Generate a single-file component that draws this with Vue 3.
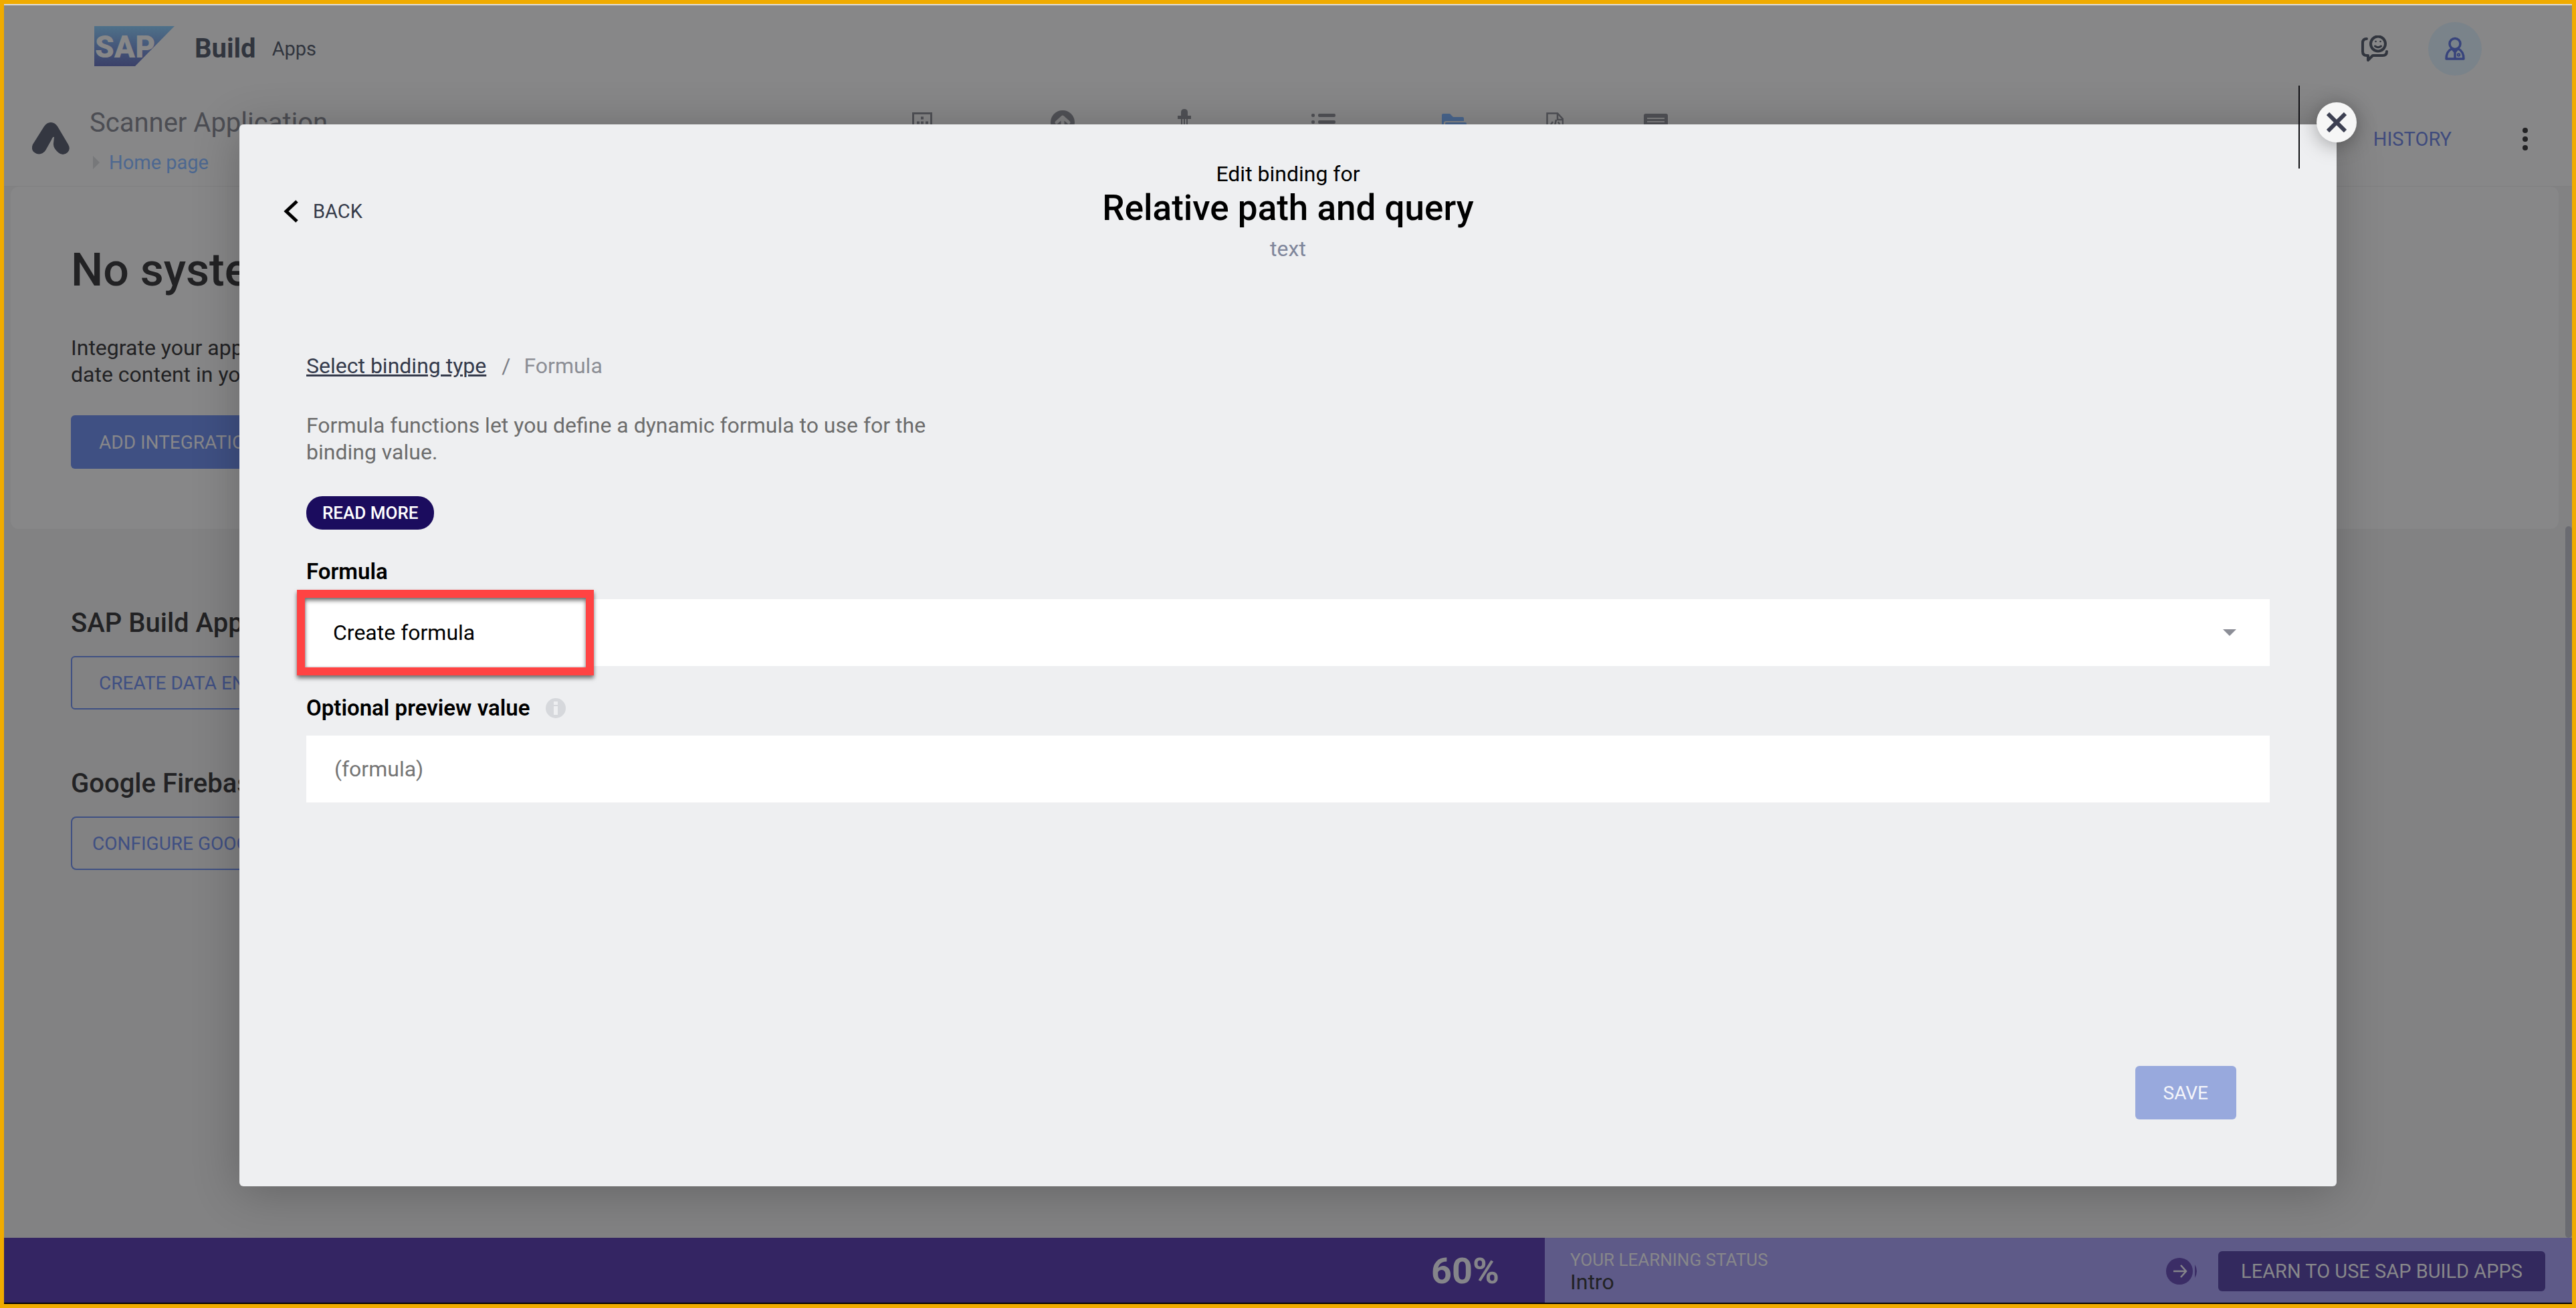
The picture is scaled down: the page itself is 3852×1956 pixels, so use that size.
<script setup>
import { ref } from 'vue'

const formula = ref('Create formula')
const preview = ref('')
</script>

<template>
  <div class="frame">
    <div class="app">
      <header class="shell">
        <svg class="sap" viewBox="0 0 120 60" width="120" height="60" role="img" aria-label="SAP">
          <defs>
            <linearGradient id="sapFill" x1="0" y1="0" x2="0" y2="1">
              <stop offset="0" stop-color="#4f7189" />
              <stop offset="0.5" stop-color="#45577a" />
              <stop offset="1" stop-color="#3b4169" />
            </linearGradient>
          </defs>
          <path d="M0 0H120L61 60H0Z" fill="url(#sapFill)" />
          <text x="1" y="47" class="sap-word">SAP</text>
        </svg>
        <strong class="brand">Build</strong>
        <span class="product">Apps</span>
        <div class="shell-actions">
          <button class="icon-button" aria-label="Feedback">
            <svg viewBox="0 0 40 40" width="40" height="40" fill="none" stroke="#31353e" stroke-width="4" stroke-linecap="round" stroke-linejoin="round">
              <path d="M8 5Q2 5 2 11V24Q2 30 8 30H10V37L17 30H32Q38 30 38 24" />
              <circle cx="25" cy="12.500" r="11" />
              <path d="M20.500 16Q25 19.500 29.500 16" stroke-width="3" />
              <path d="M21.500 9h.1M28.500 9h.1" stroke-width="2.500" />
            </svg>
          </button>
          <button class="avatar" aria-label="Profile">
            <svg viewBox="0 0 30 36" width="30" height="36" fill="none" stroke="#38447c" stroke-width="3.500" stroke-linejoin="round">
              <circle cx="15" cy="10.500" r="8" />
              <path d="M10 18Q2 22 2 33H28Q28 22 20 18" />
              <path d="M10 17L15 23L20 17M15 21V33" />
              <circle cx="20.500" cy="27" r="1" />
            </svg>
          </button>
        </div>
      </header>

      <div class="project">
        <svg class="mark" viewBox="0 0 56 48" width="56" height="48" fill="#343741">
          <path d="M18 6Q22 0 28 0T38 6L54 33Q58 40 53 45Q46 51 39 45Q31 38 32 31L33 22Q31 21 29 26L20 42Q15 49 7 47Q-3 43 1 33Z" />
        </svg>
        <div class="project-name">
          <span class="project-title">Scanner Application</span>
          <a class="crumb" href="#home">
            <svg viewBox="0 0 10 20" width="10" height="20"><path d="M0 0L10 10L0 20Z" fill="#77787a" /></svg>
            Home page
          </a>
        </div>
        <nav class="tools" aria-label="Sections">
          <svg class="t1" viewBox="0 0 30 36" width="30" height="36" fill="none" stroke="#505156" stroke-width="3">
            <path d="M1.500 1.500H28.500V34H1.500Z" /><path d="M13 8.500h4M7 15.500h4M13 15.500h4M20 15.500h4" stroke-width="4" />
          </svg>
          <svg class="t2" viewBox="0 0 36 36" width="36" height="36">
            <circle cx="18" cy="18" r="18" fill="#505156" /><path d="M9 18L18 10L27 18M18 11V28" fill="none" stroke="#818182" stroke-width="5" stroke-linecap="round" stroke-linejoin="round" />
          </svg>
          <svg class="t3" viewBox="0 0 20 36" width="20" height="36" fill="#505156">
            <path d="M5 10V5Q5 0 10 0T15 5V10H20V15H15V36H13V15H11V36H9V15H7V36H5V15H0V10Z" />
          </svg>
          <svg class="t4" viewBox="0 0 36 30" width="36" height="30" fill="#505156">
            <rect width="5" height="5" rx="2" /><rect x="10" width="26" height="5" rx="2" />
            <rect y="10" width="5" height="5" rx="2" /><rect x="10" y="10" width="26" height="5" rx="2" />
            <rect y="20" width="5" height="5" rx="2" /><rect x="10" y="20" width="26" height="5" rx="2" />
          </svg>
          <svg class="t5" viewBox="0 0 38 30" width="38" height="30" fill="#48658d">
            <path d="M0 2Q0 0 2 0H12L17 5H31Q33 5 33 7V11H6Q3 11 3 14V28H0Z" /><path d="M5 15Q5 13 7 13H35Q37 13 37 15L34 30H5Z" />
          </svg>
          <svg class="t6" viewBox="0 0 26 34" width="26" height="34" fill="none" stroke="#505156" stroke-width="2.500">
            <path d="M1.500 1.500H17L25 10V33H1.500Z" /><path d="M17 1V11H25" /><path d="M10 14L6 20M15 11L12 24M18 14L21 20" />
          </svg>
          <svg class="t7" viewBox="0 0 36 30" width="36" height="30">
            <rect width="36" height="30" rx="3" fill="#505156" /><path d="M5 7H31M5 12H31M5 17H31" stroke="#818182" stroke-width="2" />
          </svg>
        </nav>
        <div class="project-actions">
          <a class="history" href="#history">HISTORY</a>
          <button class="icon-button" aria-label="More">
            <svg viewBox="0 0 8 36" width="8" height="36" fill="#222224">
              <circle cx="4" cy="5" r="4" /><circle cx="4" cy="18" r="4" /><circle cx="4" cy="31" r="4" />
            </svg>
          </button>
        </div>
      </div>

      <main class="content">
        <section class="card">
          <h1>No systems</h1>
          <p>Integrate your app<br />date content in your</p>
          <button class="btn solid">ADD INTEGRATION</button>
        </section>
        <section class="block">
          <h2>SAP Build Apps</h2>
          <button class="btn outline">CREATE DATA ENTITY</button>
        </section>
        <section class="block">
          <h2>Google Firebase</h2>
          <button class="btn outline tight">CONFIGURE GOOGLE</button>
        </section>
        <div class="scroll-thumb"></div>
      </main>

      <footer class="learning">
        <div class="progress">60%</div>
        <div class="status">
          <div class="status-text">
            <span class="status-label">YOUR LEARNING STATUS</span>
            <span class="status-value">Intro</span>
          </div>
          <svg class="next" viewBox="0 0 46 40" width="46" height="40" fill="none">
            <path d="M43 10Q49 20 43 30Z" fill="#3b2d66" />
            <circle cx="20" cy="20" r="20" fill="#3b2d66" />
            <path d="M11 20H29M22 11L30 20L22 29" stroke="#85848b" stroke-width="2.500" />
          </svg>
          <button class="learn">LEARN TO USE SAP BUILD APPS</button>
        </div>
      </footer>
    </div>

    <div class="overlay">
      <div class="dialog" role="dialog" aria-labelledby="dialog-title">
        <header class="dialog-head">
          <button class="back">
            <svg viewBox="0 0 22 34" width="22" height="34" fill="none" stroke="#000" stroke-width="5"><path d="M20 2L4 17L20 32" /></svg>
            BACK
          </button>
          <div class="heading">
            <span class="pre">Edit binding for</span>
            <h2 id="dialog-title">Relative path and query</h2>
            <span class="kind">text</span>
          </div>
        </header>
        <div class="dialog-body">
          <nav class="trail" aria-label="Binding">
            <a href="#binding-type">Select binding type</a><span class="slash">/</span><span class="current">Formula</span>
          </nav>
          <p class="intro">Formula functions let you define a dynamic formula to use for the binding value.</p>
          <button class="read">READ MORE</button>
          <div class="field">
            <label for="formula">Formula</label>
            <div class="control">
              <select id="formula" v-model="formula">
                <option>Create formula</option>
              </select>
              <svg class="caret" viewBox="0 0 20 10" width="20" height="10"><path d="M0 0H20L10 10Z" fill="#8c8e97" /></svg>
              <div class="highlight"></div>
            </div>
          </div>
          <div class="field">
            <label for="preview">
              Optional preview value
              <svg viewBox="0 0 30 30" width="30" height="30"><circle cx="15" cy="15" r="15" fill="#d6d8dc" /><path d="M12 5H18V10H12ZM12 12H18V25H12Z" fill="#eeeff1" /></svg>
            </label>
            <input id="preview" v-model="preview" type="text" placeholder="(formula)" />
          </div>
        </div>
        <footer class="dialog-foot">
          <button class="save" disabled>SAVE</button>
        </footer>
        <div class="cursor-line"></div>
        <button class="close" aria-label="Close">
          <svg viewBox="0 0 30 30" width="30" height="30" stroke="#3d4052" stroke-width="6"><path d="M2 2L28 28M28 2L2 28" /></svg>
        </button>
      </div>
    </div>
  </div>
</template>

<style>
body {
  margin: 0;
}
</style>

<style scoped>
* {
  box-sizing: border-box;
}
.frame {
  position: relative;
  display: flex;
  min-height: 100vh;
  border: 6px solid #f0ab00;
  font-family: Roboto, "Open Sans", sans-serif;
  font-size: 32px;
  line-height: 40px;
  overflow: hidden;
}
button {
  font-family: inherit;
  border: 0;
  padding: 0;
  cursor: pointer;
}
svg {
  display: block;
  flex: none;
}
a {
  text-decoration: none;
}
h1,
h2,
p {
  margin: 0;
}
.app {
  flex: 1;
  display: flex;
  flex-direction: column;
  border-top: 2px solid #dcdcdc;
  border-bottom: 2px solid #000;
  background: #828283;
}
.shell {
  display: flex;
  align-items: center;
  height: 120px;
  padding: 10px 135px 0;
  background: #878788;
}
.sap-word {
  font-size: 46px;
  font-weight: 900;
  fill: #878788;
}
.sap {
  margin-bottom: 8px;
}
.brand {
  margin-left: 30px;
  font-size: 40px;
  font-weight: 700;
  color: #31353e;
}
.product {
  margin-left: 24px;
  font-size: 29px;
  color: #31353e;
}
.shell-actions {
  display: flex;
  align-items: center;
  gap: 60px;
  margin-left: auto;
}
.icon-button {
  background: none;
}
.avatar {
  display: flex;
  align-items: center;
  justify-content: center;
  width: 80px;
  height: 80px;
  border-radius: 50%;
  background: #7a838a;
}
.project {
  display: flex;
  height: 151px;
  padding: 32px 66px 0 42px;
  background: #878788;
  border-bottom: 1px solid #7f7f80;
}
.mark {
  margin-top: 23px;
}
.project-name {
  display: flex;
  flex-direction: column;
  width: 400px;
  margin-left: 30px;
}
.project-title {
  height: 62px;
  font-size: 40px;
  line-height: 48px;
  color: #4c4d53;
  white-space: nowrap;
}
.crumb {
  display: flex;
  align-items: center;
  gap: 14px;
  margin-left: 5px;
  font-size: 29px;
  line-height: 42px;
  color: #4d6890;
}
.tools {
  display: flex;
  align-items: flex-start;
  flex: 1;
  margin-left: 830px;
}
.t1 { margin-top: 8px; }
.t2 { margin: 5px 0 0 177px; }
.t3 { margin: 3px 0 0 154px; }
.t4 { margin: 10px 0 0 180px; }
.t5 { margin: 10px 0 0 159px; }
.t6 { margin: 8px 0 0 118px; }
.t7 { margin: 10px 0 0 120px; }
.project-actions {
  display: flex;
  align-items: center;
  align-self: flex-start;
  gap: 106px;
  height: 96px;
}
.history {
  font-size: 29px;
  color: #3f4b7d;
}
.content {
  position: relative;
  flex: 1;
}
.card {
  height: 512px;
  margin: 0 20px 0 10px;
  padding: 85px 90px 0;
  border-radius: 12px;
  background: #878788;
}
h1 {
  font-size: 68px;
  font-weight: 500;
  line-height: 80px;
  color: #222224;
  white-space: nowrap;
}
.card p {
  margin-top: 56px;
  color: #222224;
}
.btn {
  display: block;
  height: 80px;
  padding: 0 42px;
  border-radius: 6px;
  font-size: 28px;
}
.solid {
  margin-top: 41px;
  background: #3f5083;
  color: #87878a;
}
.outline {
  margin-top: 25px;
  padding: 0 40px;
  border: 2px solid #3f5083;
  background: none;
  color: #3f4f82;
}
.tight {
  padding: 0 30px;
  border-radius: 8px;
}
.block {
  margin-left: 100px;
  padding-top: 117px;
}
.block + .block {
  padding-top: 87px;
}
.block h2 {
  font-size: 40px;
  font-weight: 500;
  line-height: 48px;
  color: #222224;
}
.scroll-thumb {
  position: absolute;
  right: 0;
  top: 508px;
  bottom: 0;
  width: 10px;
  border-radius: 5px;
  background: #6a6b71;
}
.learning {
  display: flex;
  height: 97px;
}
.progress {
  width: 60%;
  padding-right: 68px;
  background: #342563;
  color: #85858a;
  font-size: 54px;
  font-weight: 700;
  line-height: 99px;
  text-align: right;
}
.status {
  flex: 1;
  display: flex;
  align-items: center;
  padding: 3px 40px 0 38px;
  background: #5e5a88;
}
.status-text {
  display: flex;
  flex-direction: column;
  flex: 1;
}
.status-label {
  font-size: 26px;
  line-height: 32px;
  color: #87878a;
}
.status-value {
  line-height: 34px;
  color: #222224;
}
.learn {
  height: 60px;
  margin-left: 32px;
  padding: 0 34px;
  border-radius: 6px;
  background: #33295e;
  color: #87878a;
  font-size: 29px;
}
.overlay {
  position: absolute;
  inset: 0;
  display: flex;
  padding: 180px 352px 176px;
}
.dialog {
  position: relative;
  flex: 1;
  display: flex;
  flex-direction: column;
  border-radius: 6px;
  background: #eeeff1;
  box-shadow: 0 8px 70px rgba(0, 0, 0, 0.24);
}
.dialog-head {
  display: grid;
  grid-template-columns: 1fr auto 1fr;
  align-items: start;
  padding: 54px 66px 0;
}
.back {
  display: flex;
  align-items: center;
  justify-self: start;
  gap: 22px;
  margin-top: 56px;
  background: none;
  color: #343a49;
  font-size: 29px;
  line-height: 40px;
}
.heading {
  display: flex;
  flex-direction: column;
  align-items: center;
  color: #000;
}
.heading h2 {
  margin-bottom: 10px;
  font-size: 53px;
  font-weight: 500;
  line-height: 62px;
}
.kind {
  color: #7f869b;
}
.dialog-body {
  padding: 135px 100px 0;
}
.trail {
  display: flex;
}
.trail a {
  color: #343a4b;
  text-decoration: underline;
  text-decoration-thickness: 3px;
}
.slash {
  margin: 0 20px 0 23px;
  color: #7c7e86;
}
.current {
  color: #8c8e95;
}
.intro {
  width: 960px;
  margin: 49px 0 46px;
  color: #6c6c6c;
}
.read {
  display: block;
  height: 50px;
  padding: 0 24px;
  border-radius: 24px;
  background: #1b0c5e;
  color: #fff;
  font-size: 26px;
  font-weight: 500;
}
.field {
  margin-top: 43px;
}
.field label {
  display: flex;
  align-items: center;
  gap: 24px;
  height: 40px;
  margin-bottom: 21px;
  color: #000;
  font-size: 33px;
  font-weight: 600;
}
.control {
  position: relative;
}
.field select,
.field input {
  display: block;
  width: 100%;
  height: 100px;
  padding: 0 40px;
  border: 0;
  border-radius: 0;
  appearance: none;
  background: #fff;
  color: #000;
  font-family: inherit;
  font-size: 32px;
}
.field input {
  padding: 0 42px;
}
.field input::placeholder {
  color: #757575;
  opacity: 1;
}
.caret {
  position: absolute;
  right: 50px;
  top: 45px;
}
.highlight {
  position: absolute;
  left: -14px;
  top: -14px;
  width: 444px;
  height: 128px;
  border: 12px solid #ff4343;
  box-shadow: 0 4px 6px rgba(0, 0, 0, 0.55), inset 0 4px 6px rgba(0, 0, 0, 0.55);
  pointer-events: none;
}
.dialog-foot {
  display: flex;
  justify-content: flex-end;
  margin-top: auto;
  padding: 0 150px 100px;
}
.save {
  height: 80px;
  padding: 0 42px;
  border-radius: 6px;
  background: #98a9dd;
  color: #f4f5fa;
  font-size: 28px;
}
.cursor-line {
  position: absolute;
  top: -58px;
  right: 55px;
  width: 2px;
  height: 124px;
  background: #101014;
}
.close {
  position: absolute;
  top: -33px;
  right: -30px;
  display: flex;
  align-items: center;
  justify-content: center;
  width: 60px;
  height: 60px;
  border-radius: 50%;
  background: #f6f6f6;
  box-shadow: 0 4px 30px rgba(0, 0, 0, 0.35);
}
</style>
